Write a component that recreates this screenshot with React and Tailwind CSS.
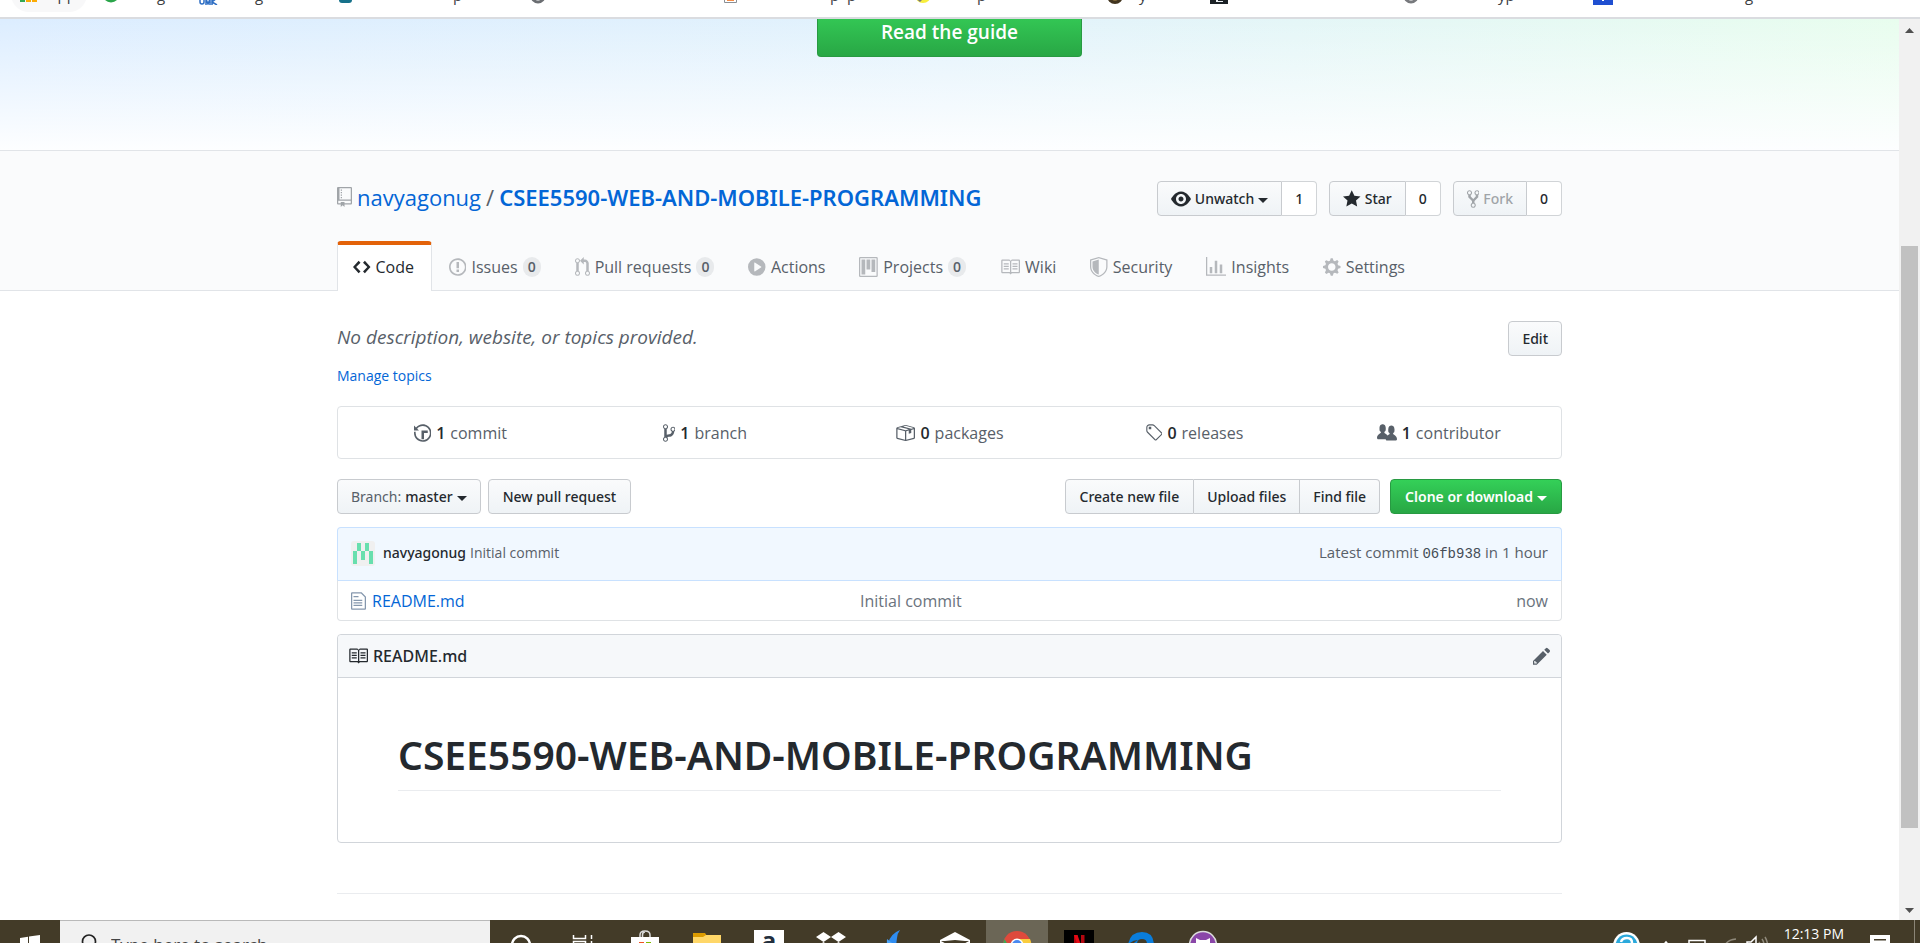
const PATHS = {
  repo: [12, 'M4 9H3V8h1v1zm0-3H3v1h1V6zm0-2H3v1h1V4zm0-2H3v1h1V2zm8-1v12c0 .55-.45 1-1 1H6v2l-1.5-1.5L3 16v-2H1c-.55 0-1-.45-1-1V1c0-.55.45-1 1-1h10c.55 0 1 .45 1 1zm-1 10H1v2h2v-1h3v1h5v-2zm0-10H2v9h9V1z'],
  eye: [16, 'M8.06 2C3 2 0 8 0 8s3 6 8.06 6C13 14 16 8 16 8s-3-6-7.94-6zM8 12c-2.2 0-4-1.78-4-4 0-2.2 1.8-4 4-4 2.22 0 4 1.8 4 4 0 2.22-1.78 4-4 4zm2-4c0 1.11-.89 2-2 2-1.11 0-2-.89-2-2 0-1.11.89-2 2-2 1.11 0 2 .89 2 2z'],
  star: [14, 'M14 6l-4.9-.64L7 1 4.9 5.36 0 6l3.6 3.26L2.67 14 7 11.67 11.33 14l-.93-4.74z'],
  fork: [10, 'M8 1a1.993 1.993 0 00-1 3.72V6L5 8 3 6V4.72A1.993 1.993 0 002 1a1.993 1.993 0 00-1 3.72V6.5l3 3v1.78A1.993 1.993 0 005 15a1.993 1.993 0 001-3.72V9.5l3-3V4.72A1.993 1.993 0 008 1zM2 4.2C1.34 4.2.8 3.65.8 3c0-.65.55-1.2 1.2-1.2.65 0 1.2.55 1.2 1.2 0 .65-.55 1.2-1.2 1.2zm3 10c-.66 0-1.2-.55-1.2-1.2 0-.65.55-1.2 1.2-1.2.65 0 1.2.55 1.2 1.2 0 .65-.55 1.2-1.2 1.2zm3-10c-.66 0-1.2-.55-1.2-1.2 0-.65.55-1.2 1.2-1.2.65 0 1.2.55 1.2 1.2 0 .65-.55 1.2-1.2 1.2z'],
  code: [14, 'M9.5 3L8 4.5 11.5 8 8 11.5 9.5 13 14 8 9.5 3zm-5 0L0 8l4.5 5L6 11.5 2.5 8 6 4.5 4.5 3z'],
  issue: [14, 'M7 2.3c3.14 0 5.7 2.56 5.7 5.7s-2.56 5.7-5.7 5.7A5.71 5.71 0 011.3 8c0-3.14 2.56-5.7 5.7-5.7zM7 1C3.14 1 0 4.14 0 8s3.14 7 7 7 7-3.14 7-7-3.14-7-7-7zm1 3H6v5h2V4zm0 6H6v2h2v-2z'],
  pull: [12, 'M11 11.28V5c-.03-.78-.34-1.47-.94-2.06C9.46 2.35 8.78 2.03 8 2H7V0L4 3l3 3V4h1c.27.02.48.11.69.31.21.2.3.42.31.69v6.28A1.993 1.993 0 0010 15a1.993 1.993 0 001-3.72zm-1 2.92c-.66 0-1.2-.55-1.2-1.2 0-.65.55-1.2 1.2-1.2.65 0 1.2.55 1.2 1.2 0 .65-.55 1.2-1.2 1.2zM4 3c0-1.11-.89-2-2-2a1.993 1.993 0 00-1 3.72v6.56A1.993 1.993 0 002 15a1.993 1.993 0 001-3.72V4.72c.59-.34 1-.98 1-1.72zm-.8 10c0 .66-.55 1.2-1.2 1.2-.65 0-1.2-.55-1.2-1.2 0-.65.55-1.2 1.2-1.2.65 0 1.2.55 1.2 1.2zM2 4.2C1.34 4.2.8 3.65.8 3c0-.65.55-1.2 1.2-1.2.65 0 1.2.55 1.2 1.2 0 .65-.55 1.2-1.2 1.2z'],
  play: [14, 'M14 8A7 7 0 110 8a7 7 0 0114 0zm-8.223 3.482l4.599-3.066a.5.5 0 000-.832L5.777 4.518A.5.5 0 005 4.934v6.132a.5.5 0 00.777.416z'],
  project: [15, 'M10 12h3V2h-3v10zm-4-2h3V2H6v8zm-4 4h3V2H2v12zm-1 1h13V1H1v14zM14 0H1a1 1 0 00-1 1v14a1 1 0 001 1h13a1 1 0 001-1V1a1 1 0 00-1-1z'],
  book: [16, 'M3 5h4v1H3V5zm0 3h4V7H3v1zm0 2h4V9H3v1zm11-5h-4v1h4V5zm0 2h-4v1h4V7zm0 2h-4v1h4V9zm2-6v9c0 .55-.45 1-1 1H9.5l-1 1-1-1H2c-.55 0-1-.45-1-1V3c0-.55.45-1 1-1h5.5l1 1 1-1H15c.55 0 1 .45 1 1zm-8 .5L7.5 3H2v9h6V3.5zm7-.5H9.5l-.5.5V12h6V3z'],
  shield: [14, 'M0 2l7-2 7 2v6.02C14 12.69 8.69 16 7 16c-1.69 0-7-3.31-7-7.98V2zm1 .75L7 1l6 1.75v5.268C13 12.104 8.449 15 7 15c-1.449 0-6-2.896-6-6.982V2.75zm1 .75L7 2v12c-1.207 0-5-2.482-5-5.985V3.5z'],
  graph: [16, 'M16 14v1H0V0h1v14h15zM5 13H3V8h2v5zm4 0H7V3h2v10zm4 0h-2V6h2v7z'],
  gear: [14, 'M14 8.77v-1.6l-1.94-.64-.45-1.09.88-1.84-1.13-1.13-1.81.91-1.09-.45-.69-1.92h-1.6l-.63 1.94-1.11.45-1.84-.88-1.13 1.13.91 1.81-.45 1.09L0 7.23v1.59l1.94.64.45 1.09-.88 1.84 1.13 1.13 1.81-.91 1.09.45.69 1.92h1.59l.63-1.94 1.11-.45 1.84.88 1.13-1.13-.92-1.81.47-1.09L14 8.75v.02zM7 11c-1.66 0-3-1.34-3-3s1.34-3 3-3 3 1.34 3 3-1.34 3-3 3z'],
  history: [14, 'M8 13H6V6h5v2H8v5zM7 1C4.81 1 2.87 2.02 1.59 3.59L0 2v4h4L2.5 4.5C3.55 3.17 5.17 2.3 7 2.3c3.14 0 5.7 2.56 5.7 5.7s-2.56 5.7-5.7 5.7A5.71 5.71 0 011.3 8c0-.34.03-.67.09-1H.08C.03 7.33 0 7.66 0 8c0 3.86 3.14 7 7 7s7-3.14 7-7-3.14-7-7-7z'],
  branch: [10, 'M10 5c0-1.11-.89-2-2-2a1.993 1.993 0 00-1 3.72v.3c-.02.52-.23.98-.63 1.38-.4.4-.86.61-1.38.63-.83.02-1.48.16-2 .45V4.72a1.993 1.993 0 00-1-3.72C.88 1 0 1.89 0 3a2 2 0 001 1.72v6.56c-.59.35-1 .99-1 1.72 0 1.11.89 2 2 2 1.11 0 2-.89 2-2 0-.53-.2-1-.53-1.36.09-.06.48-.41.59-.47.25-.11.56-.17.94-.17 1.05-.05 1.95-.45 2.75-1.25S8.95 7.77 9 6.73h-.02C9.59 6.37 10 5.73 10 5zM2 1.8c.66 0 1.2.55 1.2 1.2 0 .65-.55 1.2-1.2 1.2C1.35 4.2.8 3.65.8 3c0-.65.55-1.2 1.2-1.2zm0 12.41c-.66 0-1.2-.55-1.2-1.2 0-.65.55-1.2 1.2-1.2.65 0 1.2.55 1.2 1.2 0 .65-.55 1.2-1.2 1.2zm6-8c-.66 0-1.2-.55-1.2-1.2 0-.65.55-1.2 1.2-1.2.65 0 1.2.55 1.2 1.2 0 .65-.55 1.2-1.2 1.2z'],
  package: [16, 'M1 4.27v7.47c0 .45.3.84.75.97l6.5 1.73c.16.05.34.05.5 0l6.5-1.73c.45-.13.75-.52.75-.97V4.27c0-.45-.3-.84-.75-.97l-6.5-1.74a1.4 1.4 0 00-.5 0L1.75 3.3c-.45.13-.75.52-.75.97zm7 9.09l-6-1.59V5l6 1.61v6.75zM2 4l2.5-.67L11 5.06l-2.5.67L2 4zm13 7.77l-6 1.59V6.61l2-.55V8.5l2-.53V5.53L15 5v6.77zm-2-7.24L6.5 2.8l2-.53L15 4l-2 .53z'],
  tag: [14, 'M7.73 1.73C7.26 1.26 6.62 1 5.96 1H3.5C2.13 1 1 2.13 1 3.5v2.47c0 .66.27 1.3.73 1.77l6.06 6.06c.39.39 1.02.39 1.41 0l4.59-4.59a.996.996 0 000-1.41L7.73 1.73zM2.38 7.09c-.31-.3-.47-.7-.47-1.13V3.5c0-.88.72-1.59 1.59-1.59h2.47c.42 0 .83.16 1.13.47l6.14 6.13-4.73 4.73-6.13-6.15zM3.01 3h2v2H3V3h.01z'],
  people: [16, 'M16 12.999c0 .439-.45 1-1 1H7.995c-.539 0-.994-.447-.995-.999H1c-.54 0-1-.561-1-1 0-2.634 3-4 3-4s.229-.409 0-1c-.841-.621-1.058-.59-1-3 .058-2.419 1.367-3 2.5-3s2.442.58 2.5 3c.058 2.41-.159 2.379-1 3-.229.59 0 1 0 1s1.549.711 2.42 2.088C9.196 9.369 10 8.999 10 8.999s.229-.409 0-1c-.841-.62-1.058-.59-1-3 .058-2.419 1.367-3 2.5-3s2.437.581 2.495 3c.059 2.41-.158 2.38-1 3-.229.59 0 1 0 1s3.005 1.366 3.005 4z'],
  file: [12, 'M6 5H2V4h4v1zM2 8h7V7H2v1zm0 2h7V9H2v1zm0 2h7v-1H2v1zm10-7.5V14c0 .55-.45 1-1 1H1c-.55 0-1-.45-1-1V2c0-.55.45-1 1-1h7.5L12 4.5zM11 5L8 2H1v12h10V5z'],
  pencil: [14, 'M0 12v3h3l8-8-3-3-8 8zm3 2H1v-2h1v1h1v1zm10.3-9.3L12 6 9 3l1.3-1.3a.996.996 0 011.41 0l1.59 1.59c.39.39.39 1.02 0 1.41z'],
};

function Icon({ name, className = '' }) {
  const [w, d] = PATHS[name];
  return (
    <svg viewBox={`0 0 ${w} 16`} aria-hidden="true" fill="currentColor" className={`h-5 w-auto flex-none ${className}`}>
      <path fillRule="evenodd" d={d} />
    </svg>
  );
}

function Caret() {
  return (
    <svg viewBox="0 0 10 5" aria-hidden="true" fill="currentColor" className="mt-1 h-[5px] w-[10px] flex-none">
      <path d="M0 0h10L5 5z" />
    </svg>
  );
}

const BTN =
  "flex h-[35px] items-center gap-1 border border-[#c8cbcf] bg-linear-to-b from-[#fafbfc] to-[#eff3f6] font-['Noto_Sans',sans-serif] text-sm font-medium whitespace-nowrap";

function Social({ icon, label, count, caret, muted }) {
  return (
    <div className="flex">
      <button type="button" disabled={muted} className={`${BTN} rounded-l px-[13px] ${muted ? 'text-[#a0a4a8]' : 'text-[#24292e]'}`}>
        <Icon name={icon} />
        {label}
        {caret && <Caret />}
      </button>
      <a href="#count" className="flex h-[35px] items-center rounded-r border border-l-0 border-[#d1d4d7] bg-white px-[13px] font-['Noto_Sans',sans-serif] text-sm font-medium text-[#24292e]">
        {count}
      </a>
    </div>
  );
}

const TABS = [
  ['issue', 'Issues', true],
  ['pull', 'Pull requests', true],
  ['play', 'Actions', false],
  ['project', 'Projects', true],
  ['book', 'Wiki', false],
  ['shield', 'Security', false],
  ['graph', 'Insights', false],
  ['gear', 'Settings', false],
];

const STATS = [
  ['history', '1', 'commit'],
  ['branch', '1', 'branch'],
  ['package', '0', 'packages'],
  ['tag', '0', 'releases'],
  ['people', '1', 'contributor'],
];

function Bookmark({ className, label, labelClass = '', children }) {
  return (
    <a href="#bookmark" className={`flex h-5 flex-none items-center text-[15px] leading-5 text-[#3c4043] ${className}`}>
      <svg viewBox="0 0 20 20" className="h-5 w-5 flex-none" aria-hidden="true">{children}</svg>
      <span className={labelClass}>{label}</span>
    </a>
  );
}

function Bookmarks() {
  return (
    <nav aria-label="Bookmarks" className="flex h-[19px] flex-none items-end overflow-hidden border-b-2 border-[#dadce0] bg-white pb-3">
      <div className="-mb-[7px] ml-[11px] flex h-9 w-[76px] flex-none items-center rounded-full bg-[#f8f8f9] pl-2">
        <Bookmark label="Apps" labelClass="ml-[9px]">
          <path fill="#34a853" d="M1 14h5v4H1z" />
          <path fill="#fbab05" d="M7 14h5v4H7zM13 14h5v4h-5z" />
        </Bookmark>
      </div>
      <Bookmark className="ml-[14px] w-[98px]" label="g" labelClass="ml-[36px]">
        <circle cx="10" cy="9" r="8.500" fill="#2aa54a" />
      </Bookmark>
      <Bookmark className="w-[136px]" label="g" labelClass="ml-[36px]">
        <path d="M1 12v5q0 2 2 2t2-2v-5M7 20v-6l2 5 2-5v6M13 20v-7m5 0-5 4 5 3" fill="none" stroke="#2f6fc4" strokeWidth="1.500" />
      </Bookmark>
      <Bookmark className="w-[193px]" label="p" labelClass="ml-[98px]">
        <rect x="4" y="4" width="13" height="14" rx="3" fill="#16718a" />
      </Bookmark>
      <Bookmark className="w-[192px]" label="">
        <circle cx="10" cy="11" r="6" fill="none" stroke="#6b6e72" strokeWidth="3" />
      </Bookmark>
      <Bookmark className="w-[193px]" label="p  p" labelClass="ml-[90px] whitespace-pre">
        <path fill="#fff" stroke="#8a8f95" d="M4.500 3.500h12v14h-12z" />
        <path fill="#f58b45" d="M7 12h7v4H7z" />
      </Bookmark>
      <Bookmark className="w-[192px]" label="p" labelClass="ml-[44px]">
        <circle cx="10" cy="10" r="8" fill="#f8ee3c" />
        <path fill="#777" d="M1 6l9 8-3 3-6-5z" />
      </Bookmark>
      <Bookmark className="w-[104px]" label="y" labelClass="ml-[14px]">
        <circle cx="10" cy="11" r="8" fill="#42351f" />
        <circle cx="10" cy="13" r="3" fill="#7d6638" />
      </Bookmark>
      <Bookmark className="w-[192px]" label="">
        <path fill="#1b2126" d="M1 2h18v17H1z" />
        <path fill="#e9edf0" d="M7 14h2v2h5v1H7z" />
      </Bookmark>
      <Bookmark className="w-[192px]" label="yp" labelClass="ml-[77px]">
        <circle cx="10" cy="11" r="6" fill="none" stroke="#77797d" strokeWidth="3" />
      </Bookmark>
      <Bookmark className="" label="g" labelClass="ml-[132px]">
        <path fill="#1f4fd1" d="M0 0h20v20H0z" />
        <path fill="#fff" d="M9 12h2v4H9z" />
      </Bookmark>
    </nav>
  );
}

function Hero() {
  return (
    <section className="flex h-[132px] flex-none border-b border-[#e1e4e8] bg-linear-to-r from-[#dcedff] via-[#e2f2fc] to-[#e8fdee]">
      <div className="flex flex-1 items-start justify-center bg-linear-to-b from-white/0 to-[#fdfeff]">
        <a href="#guide" className="flex h-[38px] w-[265px] justify-center rounded-b border border-t-0 border-[#289a42] bg-linear-to-b from-[#33c654] to-[#28a745] text-[19px] leading-[26px] font-semibold text-white">
          Read the guide
        </a>
      </div>
    </section>
  );
}

function RepoHead() {
  return (
    <header className="flex-none border-b border-[#e1e4e8] bg-[#fafbfc] pt-[30px]">
      <div className="mx-auto w-full max-w-[1225px]">
        <div className="flex h-[35px] items-start justify-between">
          <h1 className="flex items-center text-[22px] leading-8 text-[#586069]">
            <Icon name="repo" className="mr-[5px] text-[#a0a4a8]" />
            <a href="#owner" className="text-[#0366d6]">navyagonug</a>
            <span className="mx-[5px]">/</span>
            <a href="#repo" className="font-['Noto_Sans',sans-serif] font-semibold text-[#0366d6]">CSEE5590-WEB-AND-MOBILE-PROGRAMMING</a>
          </h1>
          <div className="flex gap-3">
            <Social icon="eye" label="Unwatch" count="1" caret />
            <Social icon="star" label="Star" count="0" />
            <Social icon="fork" label="Fork" count="0" muted />
          </div>
        </div>
        <nav aria-label="Repository" className="mt-[25px] -mb-px flex h-[50px] text-base">
          <a href="#code" className="flex items-center gap-[5px] rounded-t border-x border-t-4 border-x-[#e1e4e8] border-t-[#e36209] bg-white pr-[17px] pb-[2px] pl-[15px] text-[#24292e]">
            <Icon name="code" />
            Code
          </a>
          {TABS.map(([icon, label, badge]) => (
            <a key={label} href="#tab" className="flex items-center gap-[5px] px-[17px] pt-[2px] text-[#586069]">
              <Icon name={icon} className="text-[#b5b8bc]" />
              {label}
              {badge && <span className="rounded-full bg-[#e8eaec] px-[5px] text-sm leading-5 font-semibold">0</span>}
            </a>
          ))}
        </nav>
      </div>
    </header>
  );
}

function Main() {
  return (
    <main className="mx-auto w-full max-w-[1225px] pt-[30px]">
      <div className="flex h-[35px] items-start justify-between">
        <p className="text-[19px] leading-8 text-[#586069] italic">No description, website, or topics provided.</p>
        <button type="button" className={`${BTN} rounded px-[13px] text-[#24292e]`}>Edit</button>
      </div>
      <a href="#topics" className="mt-2 block text-sm leading-6 text-[#0366d6]">Manage topics</a>

      <ul className="mt-[18px] grid h-[53px] grid-cols-5 rounded border border-[#dfe2e5] text-base text-[#586069]">
        {STATS.map(([icon, n, label]) => (
          <li key={label} className="flex">
            <a href="#stat" className="flex flex-1 items-center justify-center gap-[5px]">
              <Icon name={icon} />
              <span className="font-semibold text-[#24292e]">{n}</span>
              {label}
            </a>
          </li>
        ))}
      </ul>

      <div className="mt-5 flex justify-between">
        <div className="flex gap-[7px]">
          <button type="button" className={`${BTN} rounded px-[13px] text-[#24292e]`}>
            <span className="font-normal text-[#586069]">Branch:</span>
            master
            <Caret />
          </button>
          <button type="button" className={`${BTN} rounded px-[14px] text-[#24292e]`}>New pull request</button>
        </div>
        <div className="flex">
          <button type="button" className={`${BTN} rounded-l px-[14px] text-[#24292e]`}>Create new file</button>
          <button type="button" className={`${BTN} border-l-0 px-[13px] text-[#24292e]`}>Upload files</button>
          <button type="button" className={`${BTN} rounded-r border-l-0 px-[13px] text-[#24292e]`}>Find file</button>
          <button type="button" className="ml-[10px] flex h-[35px] items-center gap-1 rounded border border-[#289a42] bg-linear-to-b from-[#34d058] to-[#28a745] px-[14px] font-['Noto_Sans',sans-serif] text-sm font-semibold text-white">
            Clone or download
            <Caret />
          </button>
        </div>
      </div>

      <div className="mt-[13px] flex h-[53px] items-center rounded-t border border-b-0 border-[#c8e1ff] bg-[#f1f8ff] px-[13px] pb-[2px] text-sm text-[#586069]">
        <svg viewBox="0 0 24 25" className="h-[25px] w-6" aria-hidden="true">
          <rect width="24" height="25" rx="3" fill="#f0f0f0" />
          <path fill="#68dfae" d="M6 2h4v8H6zM14 2h4v8h-4zM2 10h4v13H2zM10 10h4v9h-4zM18 10h4v13h-4z" />
        </svg>
        <a href="#author" className="ml-2 font-['Noto_Sans',sans-serif] font-medium text-[#24292e]">navyagonug</a>
        <a href="#message" className="ml-1">Initial commit</a>
        <span className="ml-auto text-[15px]">
          Latest commit <a href="#sha" className="font-['Liberation_Mono',monospace] text-sm text-[#444d56]">06fb938</a> in 1 hour
        </span>
      </div>
      <table className="w-full border-separate border-spacing-0 rounded-b border border-[#dfe2e5] border-t-[#c8e1ff] text-base text-[#6a737d]">
        <tbody>
          <tr className="h-[39px]">
            <td className="w-[522px] pl-[13px]">
              <span className="flex items-center gap-[6px]">
                <Icon name="file" className="text-[#8597ad]" />
                <a href="#readme" className="text-[#0366d6]">README.md</a>
              </span>
            </td>
            <td><a href="#message">Initial commit</a></td>
            <td className="pr-[13px] text-right">now</td>
          </tr>
        </tbody>
      </table>

      <section className="mt-[13px] rounded border border-[#d1d5da]">
        <div className="flex h-[43px] items-center justify-between rounded-t border-b border-[#d1d5da] bg-[#f6f8fa] pr-[11px] pl-[10px] text-[#24292e]">
          <h2 className="flex items-center gap-[5px] font-['Noto_Sans',sans-serif] text-base font-medium">
            <Icon name="book" />
            README.md
          </h2>
          <button type="button" aria-label="Edit this file" className="text-[#586069]"><Icon name="pencil" /></button>
        </div>
        <div className="px-[60px] pt-[52px] pb-[51px]">
          <h1 className="border-b border-[#eaecef] pb-[10px] font-['Noto_Sans',sans-serif] text-[39px] leading-[50px] font-semibold text-[#24292e]">
            CSEE5590-WEB-AND-MOBILE-PROGRAMMING
          </h1>
        </div>
      </section>
      <hr className="mt-[50px] border-[#eaecef]" />
    </main>
  );
}

function Scrollbar() {
  return (
    <div className="flex w-[21px] flex-none flex-col items-center bg-[#f1f1f1]">
      <svg viewBox="0 0 21 21" className="h-[21px] w-[21px] flex-none" aria-hidden="true"><path d="M6 14h9l-4.500-5z" fill="#505050" /></svg>
      <div className="w-[17px] flex-[206]" />
      <div className="w-[17px] flex-[581] bg-[#c1c1c1]" />
      <div className="w-[17px] flex-[71]" />
      <svg viewBox="0 0 21 21" className="h-[21px] w-[21px] flex-none" aria-hidden="true"><path d="M6 9h9l-4.500 5z" fill="#505050" /></svg>
    </div>
  );
}

function Task({ label, active, children }) {
  return (
    <button type="button" aria-label={label} className={`flex h-[50px] w-[62px] flex-none items-center justify-center ${active ? 'bg-[#6b6656]' : ''}`}>
      <svg viewBox="0 0 30 30" className="h-[30px] w-[30px]" aria-hidden="true">{children}</svg>
    </button>
  );
}

function Taskbar() {
  return (
    <footer className="flex h-[23px] flex-none items-start overflow-hidden bg-[#433b28] text-white">
      <button type="button" aria-label="Start" className="flex h-[50px] w-[60px] flex-none items-center justify-center">
        <svg viewBox="0 0 20 20" className="h-5 w-5" aria-hidden="true"><path fill="#fff" d="M0 3l8-1.200V9.500H0zM9 1.600L20 0v9.500H9zM0 10.500h8v7.700L0 17zM9 10.500h11V20L9 18.400z" /></svg>
      </button>
      <label className="flex h-[47px] w-[430px] flex-none items-center gap-[13px] border-t border-[#b9b9b9] bg-[#f1f1f1] pl-5">
        <svg viewBox="0 0 18 20" className="h-5 w-[18px] flex-none" fill="none" stroke="#222" strokeWidth="1.700" aria-hidden="true">
          <circle cx="9" cy="7.500" r="6.500" />
          <path d="M5 13l-4 6" />
        </svg>
        <input aria-label="Search" placeholder="Type here to search" className="h-8 w-full bg-transparent text-[17px] leading-6 outline-none placeholder:text-[#444]" />
      </label>
      <Task label="Cortana"><circle cx="15" cy="15" r="9" fill="none" stroke="#fff" strokeWidth="2.500" /></Task>
      <Task label="Task view">
        <path d="M5.500 5v3.500h12V5M5.500 25v-13.500h12v13.500M23.500 5v4M23.500 11v14" fill="none" stroke="#fff" strokeWidth="1.500" />
      </Task>
      <Task label="Store">
        <path d="M10 8V5q0-4 5-4t5 4v3M12.500 8V5q0-3 2.500-3" fill="none" stroke="#ddd" strokeWidth="1.500" />
        <path fill="#fff" d="M1 7h28v22H1z" />
        <path fill="#f25022" d="M9 12h5v5H9z" /><path fill="#7fba00" d="M16 12h5v5h-5z" />
      </Task>
      <Task label="Explorer">
        <path fill="#dc9b00" d="M1 3h12l2 3v5H1z" /><path fill="#ffd768" d="M1 7h10l3-2h15v22H1z" />
      </Task>
      <Task label="Amazon">
        <path fill="#fff" d="M0 0h30v30H0z" />
        <text x="15" y="18.500" textAnchor="middle" fontSize="24" fontWeight="700" fill="#232f3e" className="font-['Open_Sans',sans-serif]">a</text>
      </Task>
      <Task label="Dropbox">
        <path fill="#fff" d="M7.500 2l7.500 5-7.500 5L0 7zM22.500 2L30 7l-7.500 5L15 7zM7.500 12l7.500 5-7.500 5L0 17zM22.500 12l7.500 5-7.500 5-7.500-5z" />
      </Task>
      <Task label="Editor">
        <path fill="#2f8cf0" d="M22 0q-3 4-3 8l-1 8-8-2q2-10 12-14z" /><path fill="#4aa3f7" d="M9 9l9 7-4 8q-6-5-5-15z" />
      </Task>
      <Task label="Mail">
        <path fill="#fff" d="M15 2l15 8v1H0v-1z" /><path fill="#433b28" d="M5 11l10-1 10 1-10 6z" /><path fill="#fff" d="M0 10.500l15 8 15-8V28H0z" />
      </Task>
      <Task label="Chrome" active>
        <circle cx="15" cy="15" r="14" fill="#de4a3c" />
        <path fill="#3fa856" d="M2.500 9L9 20l6 9A14 14 0 012.500 9z" />
        <path fill="#f9cc3e" d="M15 9h13a14 14 0 01-13 20z" />
        <circle cx="15" cy="15" r="6.500" fill="#fff" /><circle cx="15" cy="15" r="5" fill="#4a89f0" />
      </Task>
      <Task label="Netflix">
        <path fill="#000" d="M0 0h30v30H0z" /><path fill="#b20710" d="M10 5h3.500v20H10zM17 5h3.500v20H17z" /><path fill="#e50914" d="M10 5h3.500l7 20H17z" />
      </Task>
      <Task label="Edge">
        <path fill="#0a7ddb" d="M2 15Q4 2 16 2t12 14v3H12q1 5 14 4v4Q6 32 6 18q0-5 6-8-6 0-10 5z" />
        <path fill="#433b28" d="M11 14q0-5 5-5t5 5z" />
      </Task>
      <Task label="GitHub Desktop">
        <circle cx="15" cy="15" r="13.500" fill="#8a46a8" stroke="#ddd" strokeWidth="1.500" />
        <path fill="#fff" d="M8 8l4 2h6l4-2v6q1 6-4 7v7h-6v-7q-5-1-4-7z" />
      </Task>
      <div className="ml-auto flex h-[50px] flex-none items-center">
        <svg viewBox="0 0 27 27" className="mr-5 h-[27px] w-[27px]" aria-hidden="true">
          <circle cx="13.500" cy="13.500" r="13.500" fill="#fff" />
          <circle cx="13.500" cy="13.500" r="11" fill="#2ba9dc" />
          <path d="M8 10q1-4 6-4t5 5q-1 3-5 5" fill="none" stroke="#fff" strokeWidth="2.500" />
        </svg>
        <svg viewBox="0 0 12 10" className="mr-4 h-[10px] w-3" aria-hidden="true"><path d="M1 8l5-6 5 6" fill="none" stroke="#fff" strokeWidth="1.600" /></svg>
        <svg viewBox="0 0 18 12" className="mr-4 h-3 w-[18px]" aria-hidden="true"><path d="M1 1.500h16v9H1z" fill="none" stroke="#fff" strokeWidth="1.500" /><path d="M3 4h4v5H3z" fill="#fff" /></svg>
        <svg viewBox="0 0 16 16" className="mr-2 h-4 w-4" aria-hidden="true"><path d="M2 14Q2 3 14 2M7 14q0-6 7-7" fill="none" stroke="#8f897b" strokeWidth="1.500" /></svg>
        <svg viewBox="0 0 22 20" className="mr-4 h-5 w-[22px]" aria-hidden="true"><path d="M1 7h4l5-5v16l-5-5H1z" fill="none" stroke="#fff" strokeWidth="1.500" /><path d="M13 7q2 3 0 6M16 4q4 6 0 12M19 2q5 8 0 16" fill="none" stroke="#8f897b" strokeWidth="1.500" /></svg>
        <time className="mr-[26px] mb-[22px] text-sm leading-5">12:13 PM</time>
        <svg viewBox="0 0 20 20" className="mr-6 h-5 w-5" aria-hidden="true"><path fill="#fff" d="M0 0h20v16h-5v4l-4-4H0z" /><path fill="#433b28" d="M4 4h12v1.500H4zM4 8h12v1.500H4z" /></svg>
        <div className="mr-[5px] h-full w-px bg-[#8b8577]" />
      </div>
    </footer>
  );
}

export default function App() {
  return (
    <div className="flex h-screen flex-col overflow-hidden bg-white font-['Open_Sans',sans-serif]">
      <Bookmarks />
      <div className="flex min-h-0 flex-1">
        <div className="flex min-w-0 flex-1 flex-col overflow-hidden">
          <Hero />
          <RepoHead />
          <Main />
        </div>
        <Scrollbar />
      </div>
      <Taskbar />
    </div>
  );
}
